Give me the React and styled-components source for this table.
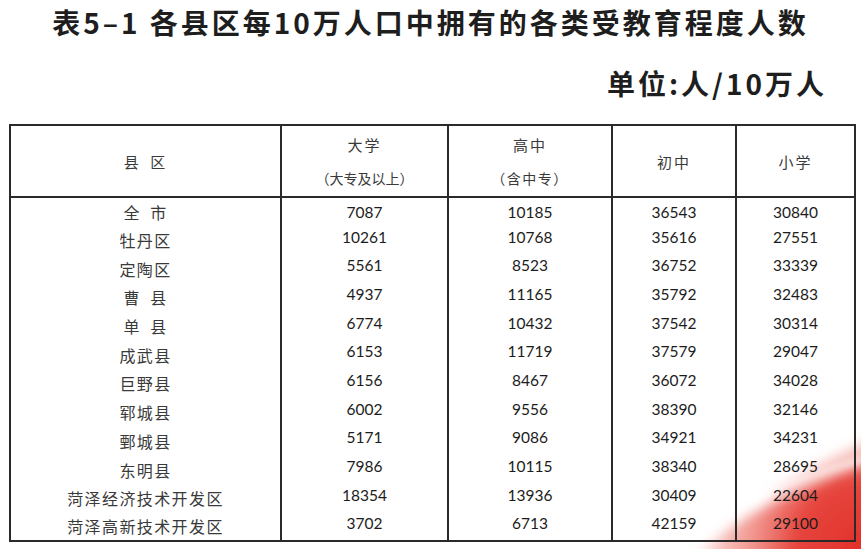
import React from 'react';
import styled, { createGlobalStyle } from 'styled-components';

const GlobalStyle = createGlobalStyle`
  html, body {
    margin: 0;
    padding: 0;
    background: #ffffff;
  }
`;

const Page = styled.div`
  position: relative;
  width: 861px;
  height: 549px;
  overflow: hidden;
  background: #ffffff;
  font-family: "Noto Sans CJK SC", "Noto Sans", sans-serif;
  color: #222;
`;

const Swoosh = styled.svg`
  position: absolute;
  right: 0;
  bottom: 0;
  z-index: 0;
`;

const Content = styled.div`
  position: relative;
  z-index: 1;
  display: flex;
  flex-direction: column;
`;

const Title = styled.h1`
  margin: 0;
  padding-top: 4px;
  text-align: center;
  font-size: 28px;
  line-height: 36px;
  font-weight: 700;
  letter-spacing: 3px;
  color: #1e1e1e;
`;

const Unit = styled.div`
  align-self: flex-end;
  margin: 25px 34px 0 0;
  font-size: 28px;
  line-height: 36px;
  font-weight: 700;
  letter-spacing: 3px;
  color: #1e1e1e;
`;

const Table = styled.table`
  margin: 23px 0 0 9px;
  width: 845px;
  border-collapse: collapse;
  table-layout: fixed;
  border: 2px solid #2a2a2a;
`;

const HeadCell = styled.th`
  height: 70px;
  padding: 0;
  border: 2px solid #2a2a2a;
  font-weight: 400;
  vertical-align: middle;
  color: #3a3a3a;
`;

const HeadStack = styled.div`
  display: flex;
  flex-direction: column;
  align-items: center;
  gap: 11px;
`;

const HeadMain = styled.span`
  font-size: 15px;
  line-height: 22px;
  letter-spacing: 2px;
`;

const HeadNote = styled.span`
  font-size: 14px;
  line-height: 22px;
  letter-spacing: ${(p) => p.$spacing || 0}px;
`;

const Row = styled.tr`
  height: 28.7px;
`;

const NameCell = styled.td`
  padding: 0;
  border-left: 2px solid #2a2a2a;
  border-right: 2px solid #2a2a2a;
  text-align: center;
  vertical-align: middle;
  font-size: 16px;
  letter-spacing: 1.4px;
  color: #3a3a3a;
  white-space: nowrap;
`;

const NumCell = styled.td`
  padding: 0 0 ${(p) => (p.$lift ? 7 : 0)}px 0;
  border-left: 2px solid #2a2a2a;
  border-right: 2px solid #2a2a2a;
  text-align: center;
  vertical-align: middle;
  font-family: "Lato", "Open Sans", sans-serif;
  font-size: 15.5px;
  color: #1c1c1c;
`;

const rows = [
  ['全\u2002市', 7087, 10185, 36543, 30840],
  ['牡丹区', 10261, 10768, 35616, 27551],
  ['定陶区', 5561, 8523, 36752, 33339],
  ['曹\u2002县', 4937, 11165, 35792, 32483],
  ['单\u2002县', 6774, 10432, 37542, 30314],
  ['成武县', 6153, 11719, 37579, 29047],
  ['巨野县', 6156, 8467, 36072, 34028],
  ['郓城县', 6002, 9556, 38390, 32146],
  ['鄄城县', 5171, 9086, 34921, 34231],
  ['东明县', 7986, 10115, 38340, 28695],
  ['菏泽经济技术开发区', 18354, 13936, 30409, 22604],
  ['菏泽高新技术开发区', 3702, 6713, 42159, 29100],
];

// red brush stroke in the lower right corner (local origin at 621,399)
function RedSwoosh() {
  return (
    <Swoosh width="240" height="150" viewBox="0 0 240 150">
      <defs>
        <radialGradient id="redBody" cx="240" cy="150" r="190" gradientUnits="userSpaceOnUse">
          <stop offset="0" stopColor="#e2302a" />
          <stop offset="0.35" stopColor="#e6463e" />
          <stop offset="0.7" stopColor="#f08a80" stopOpacity="0.6" />
          <stop offset="1" stopColor="#fbd5d0" stopOpacity="0" />
        </radialGradient>
        <filter id="soft" x="-30%" y="-30%" width="160%" height="160%">
          <feGaussianBlur stdDeviation="6" />
        </filter>
        <filter id="softer" x="-30%" y="-30%" width="160%" height="160%">
          <feGaussianBlur stdDeviation="3" />
        </filter>
      </defs>
      <path
        d="M60 170 C 110 120, 170 90, 260 58 L 260 170 Z"
        fill="url(#redBody)"
        filter="url(#soft)"
      />
      <path
        d="M150 96 C 185 72, 215 55, 260 36 L 260 60 C 220 72, 185 86, 150 100 Z"
        fill="#ee7a70"
        fillOpacity="0.45"
        filter="url(#soft)"
      />
      <path
        d="M120 104 C 160 86, 200 72, 250 58"
        stroke="#ffffff"
        strokeOpacity="0.6"
        strokeWidth="5"
        fill="none"
        filter="url(#softer)"
      />
    </Swoosh>
  );
}

export default function App() {
  return (
    <>
      <GlobalStyle />
      <Page>
        <RedSwoosh />
        <Content>
          <Title>表5–1 各县区每10万人口中拥有的各类受教育程度人数</Title>
          <Unit>单位:人/10万人</Unit>
          <Table>
            <colgroup>
              <col style={{ width: 271 }} />
              <col style={{ width: 167 }} />
              <col style={{ width: 164 }} />
              <col style={{ width: 124 }} />
              <col style={{ width: 119 }} />
            </colgroup>
            <thead>
              <tr>
                <HeadCell>
                  <HeadMain>县{'\u2002'}区</HeadMain>
                </HeadCell>
                <HeadCell>
                  <HeadStack>
                    <HeadMain>大学</HeadMain>
                    <HeadNote>（大专及以上）</HeadNote>
                  </HeadStack>
                </HeadCell>
                <HeadCell>
                  <HeadStack>
                    <HeadMain>高中</HeadMain>
                    <HeadNote $spacing={1.5}>（含中专）</HeadNote>
                  </HeadStack>
                </HeadCell>
                <HeadCell>
                  <HeadMain>初中</HeadMain>
                </HeadCell>
                <HeadCell>
                  <HeadMain>小学</HeadMain>
                </HeadCell>
              </tr>
            </thead>
            <tbody>
              {rows.map(([name, ...nums], i) => (
                <Row key={name}>
                  <NameCell>{name}</NameCell>
                  {nums.map((n, j) => (
                    <NumCell key={j} $lift={i > 0}>
                      {n}
                    </NumCell>
                  ))}
                </Row>
              ))}
            </tbody>
          </Table>
        </Content>
      </Page>
    </>
  );
}
